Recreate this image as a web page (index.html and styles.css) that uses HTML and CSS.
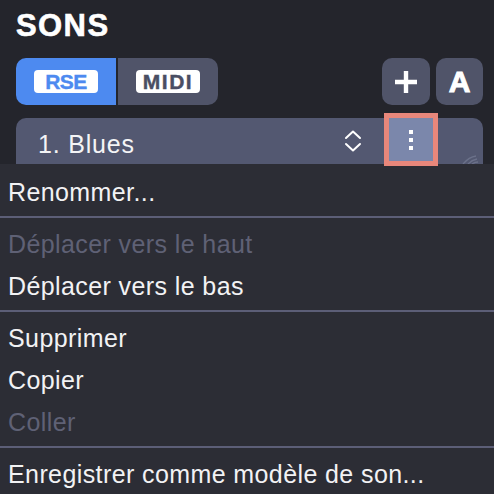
FILE: index.html
```html
<!DOCTYPE html>
<html lang="fr">
<head>
<meta charset="utf-8">
<link rel="stylesheet" href="styles.css">
</head>
<body>
<div class="panel">
  <h1 class="title">SONS</h1>
  <div class="toolbar">
    <div class="segmented">
      <div class="seg seg-active"><span class="badge badge-blue">RSE</span></div>
      <div class="seg"><span class="badge badge-gray">MIDI</span></div>
    </div>
    <div class="actions">
      <div class="icon-btn">
        <svg width="26" height="26" viewBox="0 0 26 26"><path d="M13 2V24M2 13H24" stroke="#fff" stroke-width="4.4" fill="none"/></svg>
      </div>
      <div class="icon-btn icon-a">A</div>
    </div>
  </div>
  <div class="sound-row">
    <span class="sound-name">1. Blues</span>
    <svg class="updown" width="18" height="24" viewBox="0 0 18 24"><path d="M2 9L9 2.5L16 9M2 15L9 21.5L16 15" stroke="#fff" stroke-width="2" fill="none" stroke-linecap="round" stroke-linejoin="round"/></svg>
    <div class="more-btn"><i></i><i></i><i></i></div>
    <svg class="faint" width="24" height="12" viewBox="0 0 24 12"><path d="M4 12Q10 5 17 4M9 12Q13 8 18 7M13 12Q16 10 19 10" stroke="#8a90a8" stroke-width="1.4" fill="none" opacity="0.45"/></svg>
  </div>
</div>
<ul class="menu">
  <li class="item">Renommer...</li>
  <li class="sep"></li>
  <li class="item disabled">Déplacer vers le haut</li>
  <li class="item">Déplacer vers le bas</li>
  <li class="sep"></li>
  <li class="item">Supprimer</li>
  <li class="item">Copier</li>
  <li class="item disabled">Coller</li>
  <li class="sep"></li>
  <li class="item">Enregistrer comme modèle de son...</li>
</ul>
</body>
</html>
```
FILE: styles.css
```css
* { box-sizing: border-box; }
html, body {
  margin: 0;
  padding: 0;
  background: #24252c;
  font-family: "Liberation Sans", Arial, sans-serif;
  color: #f2f2f4;
  overflow: hidden;
}
.panel {
  padding: 11px 11px 0 16px;
}
.title {
  margin: 0 0 17px 0;
  font-size: 31px;
  line-height: 30px;
  font-weight: bold;
  letter-spacing: 1.4px;
  color: #ffffff;
  -webkit-text-stroke: 0.6px #ffffff;
}
.toolbar {
  display: flex;
  justify-content: space-between;
  align-items: center;
  height: 47px;
  margin-bottom: 13px;
}
.segmented {
  display: flex;
  gap: 2px;
  height: 47px;
}
.seg {
  width: 100px;
  height: 47px;
  background: #505469;
  display: flex;
  align-items: center;
  justify-content: center;
  border-radius: 0 10px 10px 0;
}
.seg-active {
  background: #4d8af0;
  border-radius: 10px 0 0 10px;
}
.badge {
  width: 64px;
  height: 23px;
  background: #ffffff;
  border-radius: 4px;
  display: flex;
  align-items: center;
  justify-content: center;
  font-weight: bold;
  font-size: 21px;
  line-height: 23px;
  -webkit-text-stroke: 0.4px currentColor;
}
.badge-blue { color: #4d8af0; letter-spacing: -0.5px; }
.badge-gray { color: #4a4e63; letter-spacing: 1.5px; }
.actions {
  display: flex;
  gap: 6px;
}
.icon-btn {
  width: 48px;
  height: 47px;
  border-radius: 10px;
  background: #505469;
  display: flex;
  align-items: center;
  justify-content: center;
  color: #fff;
}
.icon-btn + .icon-btn { width: 47px; }
.icon-a {
  font-weight: bold;
  font-size: 30px;
  -webkit-text-stroke: 1px #ffffff;
}
.sound-row {
  display: flex;
  align-items: center;
  height: 46px;
  background: #535871;
  border-radius: 10px 10px 0 0;
  padding-left: 22px;
}
.sound-name {
  flex: 1;
  font-size: 25px;
  letter-spacing: 0.8px;
  padding-top: 6px;
  color: #f4f4f6;
}
.updown {
  margin-right: 22px;
}
.more-btn {
  position: relative;
  z-index: 2;
  align-self: flex-start;
  width: 54px;
  height: 53px;
  margin-top: -5px;
  border: 5px solid #e8877b;
  background: #7b87ab;
  display: flex;
  flex-direction: column;
  align-items: center;
  justify-content: center;
  gap: 4px;
}
.more-btn i {
  display: block;
  width: 4px;
  height: 4px;
  background: #ffffff;
}
.faint {
  align-self: flex-end;
  margin-left: 21px;
}
.menu {
  list-style: none;
  margin: 0;
  padding: 7px 0 0 0;
  background: #2c2d35;
  height: 340px;
}
.item {
  height: 42px;
  line-height: 42px;
  font-size: 25px;
  letter-spacing: 0.4px;
  padding-left: 8px;
  color: #f2f2f4;
  white-space: nowrap;
}
.item.disabled {
  color: #5f6175;
}
.sep {
  height: 2px;
  margin: 3px 0 5px 0;
  background: #5c5e77;
}
```
